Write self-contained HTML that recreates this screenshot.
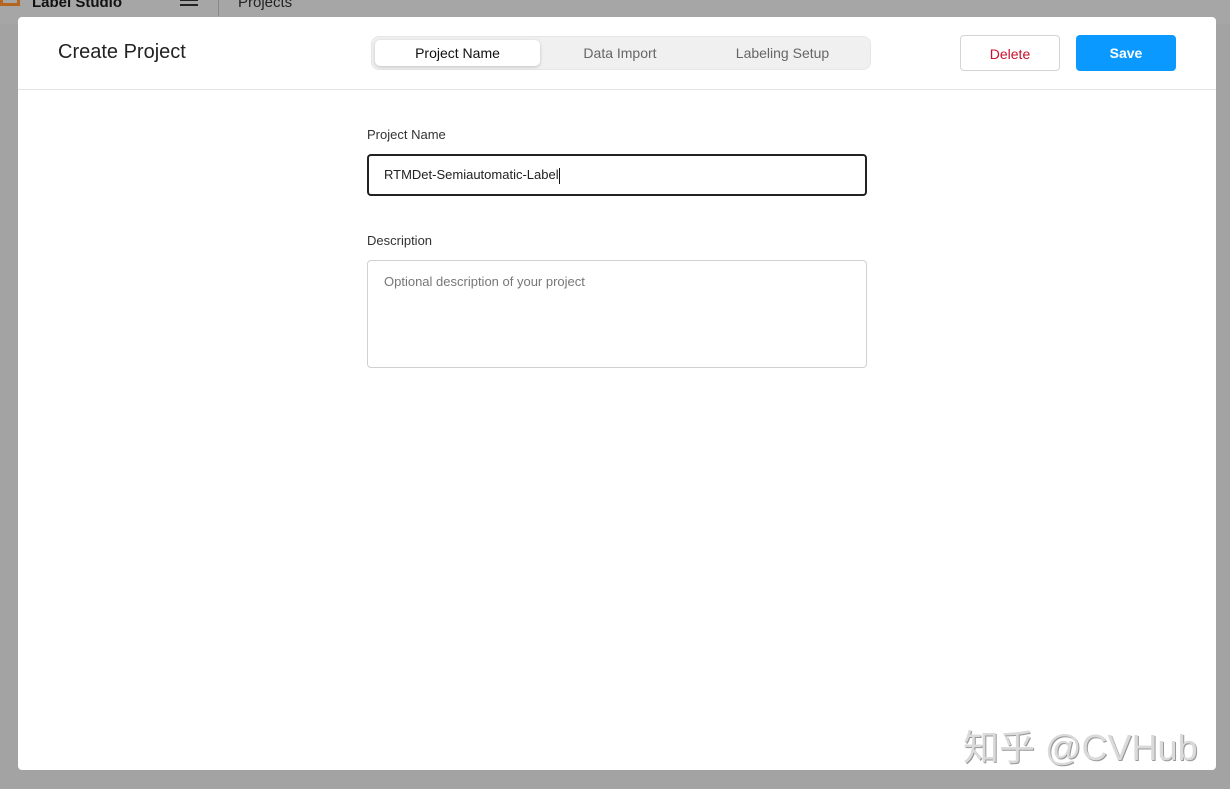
<!DOCTYPE html>
<html><head><meta charset="utf-8"><style>
*{box-sizing:border-box;margin:0;padding:0}
body{width:1230px;height:789px;background:#a3a3a3;font-family:"Liberation Sans",sans-serif;position:relative;overflow:hidden}
.top{position:absolute;left:0;top:0;width:1230px;height:24px;background:#a6a6a6}
.modal{position:absolute;left:18px;top:17px;width:1198px;height:753px;background:#fff;border-radius:4px}
.hdr{height:73px;border-bottom:1px solid #e2e2e2;position:relative}
.title{position:absolute;left:40px;top:24px;font-size:20px;color:#222}
.tabs{position:absolute;left:353px;top:19px;width:500px;height:34px;background:#f0f0f0;border:1px solid #e6e6e6;border-radius:8px}
.tab{position:absolute;top:0;height:32px;line-height:32px;font-size:14px;color:#666;text-align:center}
.tab.a{left:3px;top:3px;width:165px;height:26px;line-height:26px;background:#fff;border-radius:5px;box-shadow:0 1px 3px rgba(0,0,0,.2);color:#111}
.btn{position:absolute;top:18px;height:36px;border-radius:4px;font-size:14px;text-align:center;line-height:36px}
.del{left:942px;width:100px;border:1px solid #d4d4d4;color:#c8102e}
.save{left:1058px;width:100px;background:#0a99ff;color:#fff;font-weight:bold}
.lbl{position:absolute;left:349px;font-size:13px;color:#333}
.inp{position:absolute;left:349px;width:500px;border-radius:4px}
</style></head><body>
<div class="top">
<div style="position:absolute;left:0;top:-6px;width:20px;height:12px;border:3px solid #b5651d;border-top:none"></div>
<div style="position:absolute;left:32px;top:-6px;font-size:15px;font-weight:bold;color:#111">Label Studio</div>
<div style="position:absolute;left:180px;top:4px;width:18px;height:2px;background:#222"></div>
<div style="position:absolute;left:180px;top:-1px;width:18px;height:2px;background:#222"></div>
<div style="position:absolute;left:218px;top:0;width:1px;height:16px;background:#888"></div>
<div style="position:absolute;left:238px;top:-6px;font-size:15px;color:#222">Projects</div>
</div>
<div class="modal">
<div class="hdr">
<div class="title">Create Project</div>
<div class="tabs">
<div class="tab a">Project Name</div>
<div class="tab" style="left:168px;width:160px">Data Import</div>
<div class="tab" style="left:328px;width:165px">Labeling Setup</div>
</div>
<div class="btn del">Delete</div>
<div class="btn save">Save</div>
</div>
<div class="lbl" style="top:110px">Project Name</div>
<div class="inp" style="top:137px;height:42px;border:2px solid #222;padding-left:15px;line-height:38px;font-size:13px;color:#222">RTMDet-Semiautomatic-Label<span style="display:inline-block;width:1px;height:16px;background:#111;vertical-align:middle"></span></div>
<div class="lbl" style="top:216px">Description</div>
<div class="inp" style="top:243px;height:108px;border:1px solid #d0d0d0;padding:13px 16px;font-size:13px;color:#777">Optional description of your project</div>
<div style="position:absolute;left:945px;top:702px;font-size:36px;color:#dadada;font-family:'Liberation Sans','Noto Sans CJK SC',sans-serif;text-shadow:1px 1px 0 #999">知乎 @CVHub</div>
</div>
</body></html>
